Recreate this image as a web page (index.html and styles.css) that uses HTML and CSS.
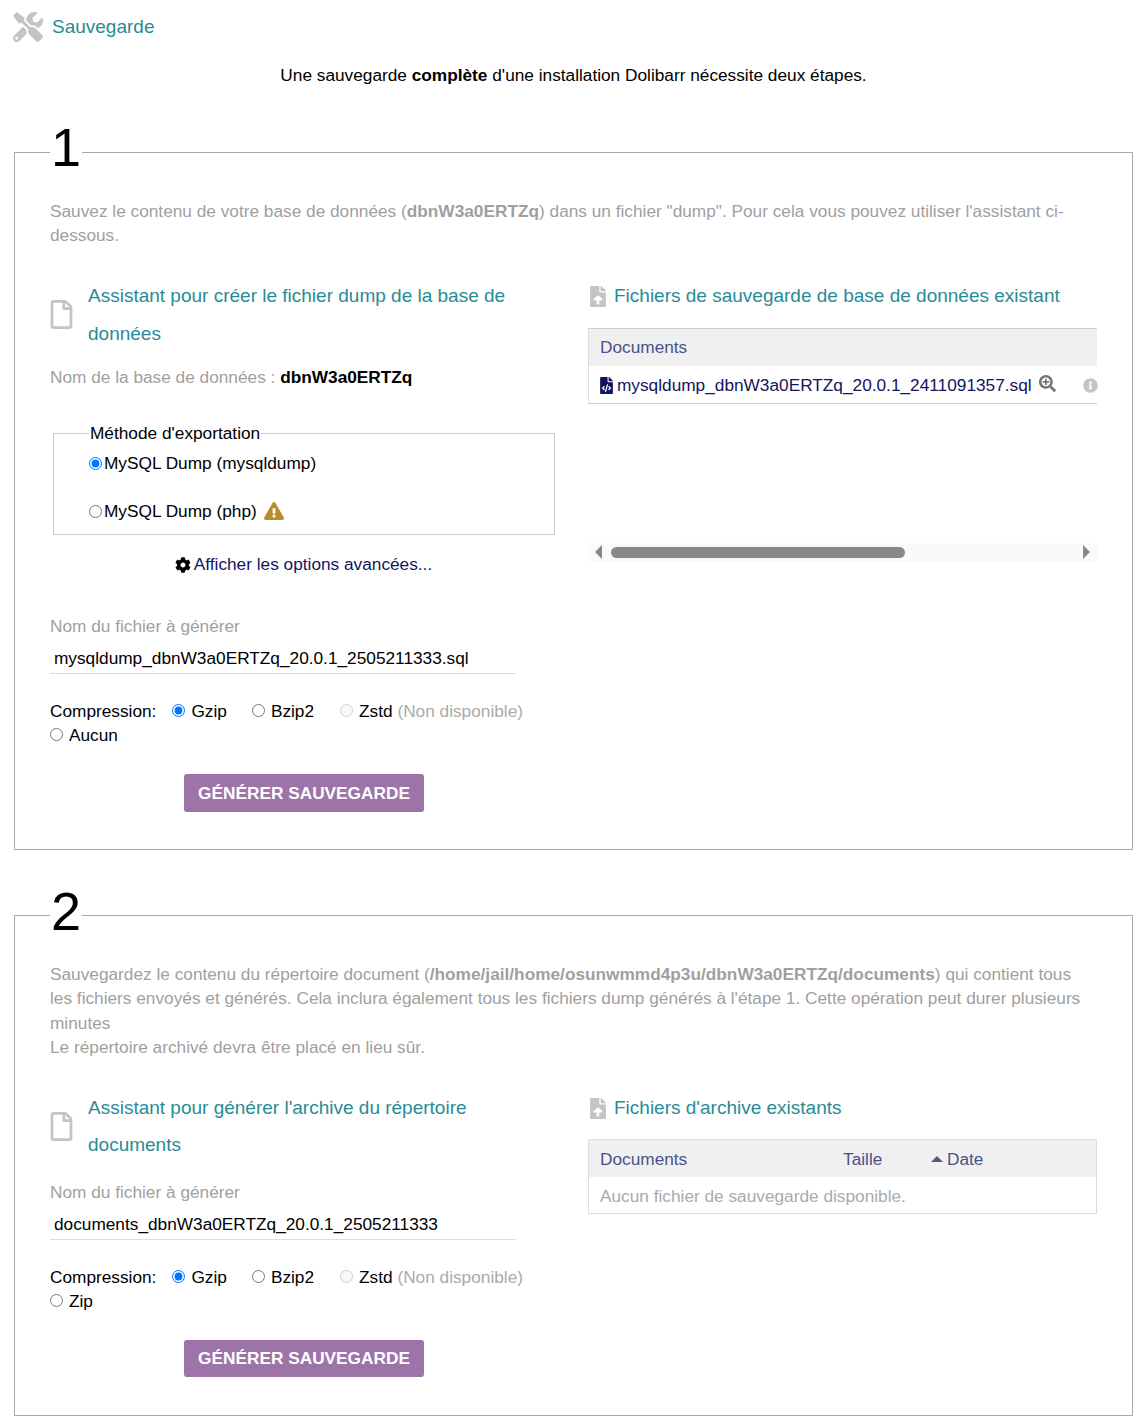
FILE: index.html
```html
<!DOCTYPE html>
<html lang="fr">
	<head>
		<meta charset="UTF-8">
		<link rel="stylesheet" href="styles.css">
		<title>Sauvegarde</title>
	</head>
	<body>
		<svg class="sprites" width="0" height="0">
			<symbol id="i-tools" viewBox="0 0 512 512"><path d="M501.1 395.7L384 278.6c-23.1-23.1-57.6-27.6-85.4-13.9L192 158.1V96L64 0 0 64l96 128h62.1l106.6 106.6c-13.6 27.8-9.2 62.3 13.9 85.4l117.1 117.1c14.6 14.6 38.2 14.6 52.7 0l52.7-52.7c14.5-14.6 14.5-38.2 0-52.7zM331.7 225c28.3 0 54.9 11 74.9 31l19.4 19.4c15.8-6.9 30.8-16.5 43.8-29.5 37.1-37.1 49.7-89.3 37.9-136.7-2.2-9-13.5-12.1-20.1-5.5l-74.4 74.4-67.9-11.3L334 98.9l74.4-74.4c6.6-6.6 3.4-17.9-5.7-20.2-47.4-11.7-99.6.9-136.6 37.9-28.5 28.5-41.9 66.1-41.2 103.6l82.1 82.1c8.1-1.9 16.5-2.9 24.7-2.9zm-103.9 82l-56.7-56.7L18.7 402.8c-25 25-25 65.5 0 90.5s65.5 25 90.5 0l123.6-123.6c-7.6-19.9-9.9-41.6-5-62.7zM64 472c-13.2 0-24-10.8-24-24 0-13.3 10.7-24 24-24s24 10.7 24 24c0 13.2-10.7 24-24 24z"/></symbol>
			<symbol id="i-file" viewBox="0 0 384 512"><path d="M369.9 97.9L286 14C277 5 264.8-.1 252.1-.1H48C21.5 0 0 21.5 0 48v416c0 26.5 21.5 48 48 48h288c26.5 0 48-21.5 48-48V131.9c0-12.7-5.1-25-14.1-34zM332.1 128H256V51.9l76.1 76.1zM48 464V48h160v104c0 13.3 10.7 24 24 24h104v288H48z"/></symbol>
			<symbol id="i-upload" viewBox="0 0 384 512"><path d="M224 136V0H24C10.7 0 0 10.7 0 24v464c0 13.3 10.7 24 24 24h336c13.3 0 24-10.7 24-24V160H248c-13.2 0-24-10.8-24-24zm65.18 216.01H224v80c0 8.84-7.16 16-16 16h-32c-8.84 0-16-7.16-16-16v-80H94.82c-14.28 0-21.41-17.29-11.27-27.36l96.42-95.7c6.65-6.61 17.39-6.61 24.04 0l96.42 95.7c10.15 10.07 3.03 27.36-11.25 27.36zM377 105L279.1 7c-4.5-4.5-10.6-7-17-7H256v128h128v-6.1c0-6.3-2.5-12.4-7-16.9z"/></symbol>
			<symbol id="i-code" viewBox="0 0 384 512"><path d="M384 121.941V128H256V0h6.059c6.365 0 12.47 2.529 16.971 7.029l97.941 97.941A24.005 24.005 0 0 1 384 121.941zM248 160c-13.2 0-24-10.8-24-24V0H24C10.745 0 0 10.745 0 24v464c0 13.255 10.745 24 24 24h336c13.255 0 24-10.745 24-24V160H248zM123.206 400.505a5.4 5.4 0 0 1-7.633.246l-64.866-60.812a5.4 5.4 0 0 1 0-7.879l64.866-60.812a5.4 5.4 0 0 1 7.633.246l19.579 20.885a5.4 5.4 0 0 1-.372 7.747L101.65 336l40.763 35.874a5.4 5.4 0 0 1 .372 7.747l-19.579 20.884zm51.295 50.479l-27.453-7.97a5.402 5.402 0 0 1-3.681-6.692l61.44-211.626a5.402 5.402 0 0 1 6.692-3.681l27.452 7.97a5.4 5.4 0 0 1 3.68 6.692l-61.44 211.626a5.397 5.397 0 0 1-6.69 3.681zm160.792-111.045l-64.866 60.812a5.4 5.4 0 0 1-7.633-.246l-19.58-20.885a5.4 5.4 0 0 1 .372-7.747L284.35 336l-40.763-35.874a5.4 5.4 0 0 1-.372-7.747l19.58-20.885a5.4 5.4 0 0 1 7.633-.246l64.866 60.812a5.4 5.4 0 0 1-.001 7.879z"/></symbol>
			<symbol id="i-zoom" viewBox="0 0 512 512"><path d="M304 192v32c0 6.6-5.4 12-12 12h-56v56c0 6.6-5.4 12-12 12h-32c-6.6 0-12-5.4-12-12v-56h-56c-6.6 0-12-5.4-12-12v-32c0-6.6 5.4-12 12-12h56v-56c0-6.6 5.4-12 12-12h32c6.6 0 12 5.4 12 12v56h56c6.6 0 12 5.4 12 12zm201 284.7L476.7 505c-9.4 9.4-24.6 9.4-33.9 0L343 405.3c-4.5-4.5-7-10.6-7-17V372c-35.3 27.6-79.7 44-128 44C93.1 416 0 322.9 0 208S93.1 0 208 0s208 93.1 208 208c0 48.3-16.4 92.7-44 128h16.3c6.4 0 12.5 2.5 17 7l99.7 99.7c9.3 9.4 9.3 24.6 0 34zM338 208c0-71.8-58.2-130-130-130S78 136.2 78 208s58.2 130 130 130 130-58.2 130-130z" fill-rule="evenodd"/></symbol>
			<symbol id="i-info" viewBox="0 0 512 512"><path d="M256 8C119.043 8 8 119.083 8 256c0 136.997 111.043 248 248 248s248-111.003 248-248C504 119.083 392.957 8 256 8zm0 110c23.196 0 42 18.804 42 42s-18.804 42-42 42-42-18.804-42-42 18.804-42 42-42zm56 254c0 6.627-5.373 12-12 12h-88c-6.627 0-12-5.373-12-12v-24c0-6.627 5.373-12 12-12h12v-64h-12c-6.627 0-12-5.373-12-12v-24c0-6.627 5.373-12 12-12h64c6.627 0 12 5.373 12 12v100h12c6.627 0 12 5.373 12 12v24z"/></symbol>
			<symbol id="i-warn" viewBox="0 0 576 512"><path d="M569.517 440.013C587.975 472.007 564.806 512 527.94 512H48.054c-36.937 0-59.999-40.055-41.577-71.987L246.423 24.013c18.467-32.009 64.72-31.951 83.154 0l239.94 416zM288 354c-25.405 0-46 20.595-46 46s20.595 46 46 46 46-20.595 46-46-20.595-46-46-46zm-43.673-165.346l7.418 136c.347 6.364 5.609 11.346 11.982 11.346h48.546c6.373 0 11.635-4.982 11.982-11.346l7.418-136c.375-6.874-5.098-12.654-11.982-12.654h-63.383c-6.884 0-12.356 5.78-11.981 12.654z"/></symbol>
			<symbol id="i-cog" viewBox="0 0 512 512"><path d="M487.4 315.7l-42.6-24.6c4.3-23.2 4.3-47 0-70.2l42.6-24.6c4.9-2.8 7.1-8.6 5.5-14-11.1-35.6-30-67.8-54.7-94.6-3.8-4.1-10-5.1-14.8-2.3L380.8 110c-17.9-15.4-38.5-27.3-60.8-35.1V25.8c0-5.6-3.9-10.5-9.4-11.7-36.7-8.2-74.3-7.8-109.2 0-5.5 1.2-9.4 6.1-9.4 11.7V75c-22.2 7.9-42.8 19.8-60.8 35.1L88.7 85.5c-4.9-2.8-11-1.9-14.8 2.3-24.7 26.7-43.6 58.9-54.7 94.6-1.7 5.4.6 11.2 5.5 14L67.3 221c-4.3 23.2-4.3 47 0 70.2l-42.6 24.6c-4.9 2.8-7.1 8.6-5.5 14 11.1 35.6 30 67.8 54.7 94.6 3.8 4.1 10 5.1 14.8 2.3l42.6-24.6c17.9 15.4 38.5 27.3 60.8 35.1v49.2c0 5.6 3.9 10.5 9.4 11.7 36.7 8.2 74.3 7.8 109.2 0 5.5-1.2 9.4-6.1 9.4-11.7v-49.2c22.2-7.9 42.8-19.8 60.8-35.1l42.6 24.6c4.9 2.8 11 1.9 14.8-2.3 24.7-26.7 43.6-58.9 54.7-94.6 1.5-5.5-.7-11.3-5.6-14.1zM256 336c-44.1 0-80-35.9-80-80s35.9-80 80-80 80 35.9 80 80-35.9 80-80 80z"/></symbol>
		</svg>

		<div class="page-title">
			<svg class="icon-tools"><use href="#i-tools"/></svg>
			<span>Sauvegarde</span>
		</div>
		<p class="intro">Une sauvegarde <b>complète</b> d'une installation Dolibarr nécessite deux étapes.</p>

		<!-- step 1 -->
		<fieldset class="step step-one">
			<legend>1</legend>
			<p class="step-text">Sauvez le contenu de votre base de données (<b>dbnW3a0ERTZq</b>) dans un fichier "dump". Pour cela vous pouvez utiliser l'assistant ci-dessous.</p>
			<div class="columns">
				<div class="col-left">
					<div class="section-title">
						<svg class="icon-file"><use href="#i-file"/></svg>
						<span>Assistant pour créer le fichier dump de la base de données</span>
					</div>
					<p class="dbname"><span class="muted">Nom de la base de données : </span><b>dbnW3a0ERTZq</b></p>
					<fieldset class="method">
						<legend>Méthode d'exportation</legend>
						<div class="method-row"><input type="radio" name="method" checked><label>MySQL Dump (mysqldump)</label></div>
						<div class="method-row"><input type="radio" name="method"><label>MySQL Dump (php)</label><svg class="icon-warn"><use href="#i-warn"/></svg></div>
					</fieldset>
					<div class="advanced"><svg class="icon-cog"><use href="#i-cog"/></svg><a href="#">Afficher les options avancées...</a></div>
					<p class="field-label muted">Nom du fichier à générer</p>
					<input class="file-input" type="text" value="mysqldump_dbnW3a0ERTZq_20.0.1_2505211333.sql">
					<div class="compression">
						<span class="compression-label">Compression:</span>
						<span class="choice"><input type="radio" name="comp1" checked>Gzip</span>
						<span class="choice"><input type="radio" name="comp1">Bzip2</span>
						<span class="choice choice-off"><input type="radio" name="comp1" disabled>Zstd <i class="off">(Non disponible)</i></span>
						<span class="choice"><input type="radio" name="comp1">Aucun</span>
					</div>
					<div class="submit-row"><a class="button" href="#">GÉNÉRER SAUVEGARDE</a></div>
				</div>
				<div class="col-right">
					<div class="files-title">
						<svg class="icon-upload"><use href="#i-upload"/></svg>
						<span>Fichiers de sauvegarde de base de données existant</span>
					</div>
					<div class="files files-cut">
						<div class="files-head">Documents</div>
						<div class="files-row">
							<svg class="icon-code"><use href="#i-code"/></svg>
							<a href="#">mysqldump_dbnW3a0ERTZq_20.0.1_2411091357.sql</a>
							<svg class="icon-zoom"><use href="#i-zoom"/></svg>
							<svg class="icon-info"><use href="#i-info"/></svg>
						</div>
					</div>
					<div class="scrollbar">
						<span class="arrow arrow-left"></span>
						<span class="thumb"></span>
						<span class="arrow arrow-right"></span>
					</div>
				</div>
			</div>
		</fieldset>

		<!-- step 2 -->
		<fieldset class="step step-two">
			<legend>2</legend>
			<p class="step-text">Sauvegardez le contenu du répertoire document (<b>/home/jail/home/osunwmmd4p3u/dbnW3a0ERTZq/documents</b>) qui contient tous les fichiers envoyés et générés. Cela inclura également tous les fichiers dump générés à l'étape 1. Cette opération peut durer plusieurs minutes<br>Le répertoire archivé devra être placé en lieu sûr.</p>
			<div class="columns">
				<div class="col-left">
					<div class="section-title">
						<svg class="icon-file"><use href="#i-file"/></svg>
						<span>Assistant pour générer l'archive du répertoire documents</span>
					</div>
					<p class="field-label field-label-two muted">Nom du fichier à générer</p>
					<input class="file-input" type="text" value="documents_dbnW3a0ERTZq_20.0.1_2505211333">
					<div class="compression">
						<span class="compression-label">Compression:</span>
						<span class="choice"><input type="radio" name="comp2" checked>Gzip</span>
						<span class="choice"><input type="radio" name="comp2">Bzip2</span>
						<span class="choice choice-off"><input type="radio" name="comp2" disabled>Zstd <i class="off">(Non disponible)</i></span>
						<span class="choice"><input type="radio" name="comp2">Zip</span>
					</div>
					<div class="submit-row"><a class="button" href="#">GÉNÉRER SAUVEGARDE</a></div>
				</div>
				<div class="col-right">
					<div class="files-title">
						<svg class="icon-upload"><use href="#i-upload"/></svg>
						<span>Fichiers d'archive existants</span>
					</div>
					<div class="files files-boxed">
						<div class="files-head">
							<span class="head-doc">Documents</span>
							<span class="head-size">Taille</span>
							<span class="head-date"><span class="sort-up"></span>Date</span>
						</div>
						<div class="files-row files-empty">Aucun fichier de sauvegarde disponible.</div>
					</div>
				</div>
			</div>
		</fieldset>
	</body>
</html>
```

FILE: styles.css
```css
body {
	margin: 0;
	padding: 0 11px 0 14px;
	font-family: "Liberation Sans", Arial, sans-serif;
	font-size: 17.25px;
	line-height: 24.3px;
	color: #000;
	background: #fff;
}
a {
	color: #14145f;
	text-decoration: none;
}
p {
	margin: 0;
}
.sprites {
	position: absolute;
}
.muted {
	color: #9f9f9f;
}

/* page title */
.page-title {
	display: flex;
	align-items: center;
	height: 30px;
	margin-top: 12px;
	margin-left: -1px;
	font-size: 19px;
	color: #288c96;
}
.icon-tools {
	width: 30px;
	height: 30px;
	margin-right: 9px;
	fill: #c4c4c4;
}
.intro {
	margin-top: 21px;
	text-align: center;
}

/* big numbered boxes */
.step {
	margin: 40px 0 0;
	padding: 0 35px 37px;
	border: 1px solid #aaa;
	min-width: 0;
}
.step-one {
	margin-top: 39px;
}
.step-two {
	padding-bottom: 38px;
}
.step > legend {
	padding: 0 1px 10px;
	font-size: 54px;
	line-height: 42px;
}
.step-text {
	margin-top: 20.7px;
	color: #9f9f9f;
}
.step-two .step-text {
	margin-top: 20.2px;
}
.columns {
	display: flex;
	margin-top: 29px;
}
.step-two .columns {
	margin-top: 29.5px;
}
.col-left {
	width: 500px;
	flex: none;
}
.col-right {
	width: 509px;
	margin-left: 38px;
	flex: none;
}

/* headings */
.section-title {
	display: flex;
	align-items: center;
	font-size: 19px;
	line-height: 37.6px;
	color: #288c96;
}
.step-one .section-title {
	line-height: 38px;
}
.icon-file {
	width: 23px;
	height: 29px;
	margin-right: 15px;
	flex: none;
	fill: #c4c4c4;
}
.dbname {
	margin-top: 12.2px;
}
.dbname b {
	color: #000;
}

/* export method */
.method {
	margin: 32px -5px 0 3px;
	padding: 6px 0 11px 35px;
	border: 1px solid #ccc;
}
.method legend {
	padding: 0 1px;
}
.method-row {
	display: flex;
	align-items: center;
	height: 24px;
}
.method-row + .method-row {
	margin-top: 24px;
}
.method-row input {
	margin: 0 2px 0 0;
}
.icon-warn {
	width: 20px;
	height: 18px;
	margin-left: 7px;
	fill: #b68c2c;
}
.advanced {
	display: flex;
	align-items: center;
	justify-content: center;
	margin-top: 17px;
	padding-left: 7px;
}
.icon-cog {
	width: 16px;
	height: 16px;
	margin-right: 3px;
	fill: #000;
}
.field-label {
	margin-top: 37px;
}
.field-label-two {
	margin-top: 16px;
}

/* file name input */
.file-input {
	display: block;
	box-sizing: border-box;
	width: 466px;
	height: 30px;
	margin-top: 6px;
	padding: 0 4px;
	border: 0;
	border-bottom: 1px solid #ddd;
	font-family: inherit;
	font-size: inherit;
	color: #000;
	outline: none;
}

/* compression choice */
.compression {
	display: flex;
	flex-wrap: wrap;
	margin-top: 25px;
	line-height: 24px;
}
.compression-label {
	margin-right: 16px;
}
.choice {
	margin-right: 25px;
}
.choice-off {
	margin-left: 1px;
}
.choice:last-child {
	flex-basis: 100%;
	margin-right: 0;
}
.choice input {
	margin: 0 6px 0 0;
}
.off {
	font-style: normal;
	color: #aaa;
}
.submit-row {
	display: flex;
	justify-content: center;
	margin-top: 27px;
	padding-left: 8px;
}
.button {
	display: block;
	padding: 0 14px;
	height: 38px;
	line-height: 38px;
	border-radius: 3px;
	background: #9d74a8;
	font-weight: bold;
	color: #fff;
}
.step-two .button {
	height: 37px;
	line-height: 37px;
}

/* existing files */
.files-title {
	display: flex;
	align-items: center;
	height: 39px;
	font-size: 19px;
	color: #288c96;
}
.icon-upload {
	width: 16px;
	height: 21px;
	margin: 0 8px 0 2px;
	fill: #c4c4c4;
}
.files {
	margin-top: 12px;
	border-top: 1px solid #ccc;
	border-bottom: 1px solid #ccc;
	border-left: 1px solid #ddd;
}
.files-boxed {
	margin-top: 11.5px;
	border: 1px solid #ddd;
}
.files-head {
	display: flex;
	align-items: center;
	height: 37px;
	padding-left: 11px;
	background: #f0f0f0;
	color: #4c5089;
}
.head-doc {
	width: 243px;
}
.head-size {
	width: 49px;
}
.head-date {
	margin-left: 39px;
}
.sort-up {
	display: inline-block;
	margin: 0 4px 3px 0;
	border-left: 6px solid transparent;
	border-right: 6px solid transparent;
	border-bottom: 6px solid #5a5a78;
}
.files-row {
	display: flex;
	align-items: center;
	height: 35px;
	padding: 2px 0 0 11px;
}
.files-empty {
	height: 34px;
	color: #aaa;
}
.icon-code {
	width: 13px;
	height: 17px;
	margin-right: 4px;
	fill: #12145c;
}
.icon-zoom {
	width: 17px;
	height: 17px;
	margin: -4px 0 0 7px;
	fill: #777;
}
.icon-info {
	width: 15px;
	height: 15px;
	margin-left: auto;
	margin-right: -1px;
	fill: #c4c4c4;
}

/* fake scrollbar under the cut table */
.scrollbar {
	display: flex;
	align-items: center;
	height: 19px;
	margin-top: 139px;
	background: #fafafa;
}
.thumb {
	width: 294px;
	height: 11px;
	margin-left: 9px;
	border-radius: 6px;
	background: #888;
}
.arrow {
	border-top: 7px solid transparent;
	border-bottom: 7px solid transparent;
}
.arrow-left {
	margin-left: 7px;
	border-right: 7px solid #888;
}
.arrow-right {
	margin-left: auto;
	margin-right: 7px;
	border-left: 7px solid #888;
}
```
